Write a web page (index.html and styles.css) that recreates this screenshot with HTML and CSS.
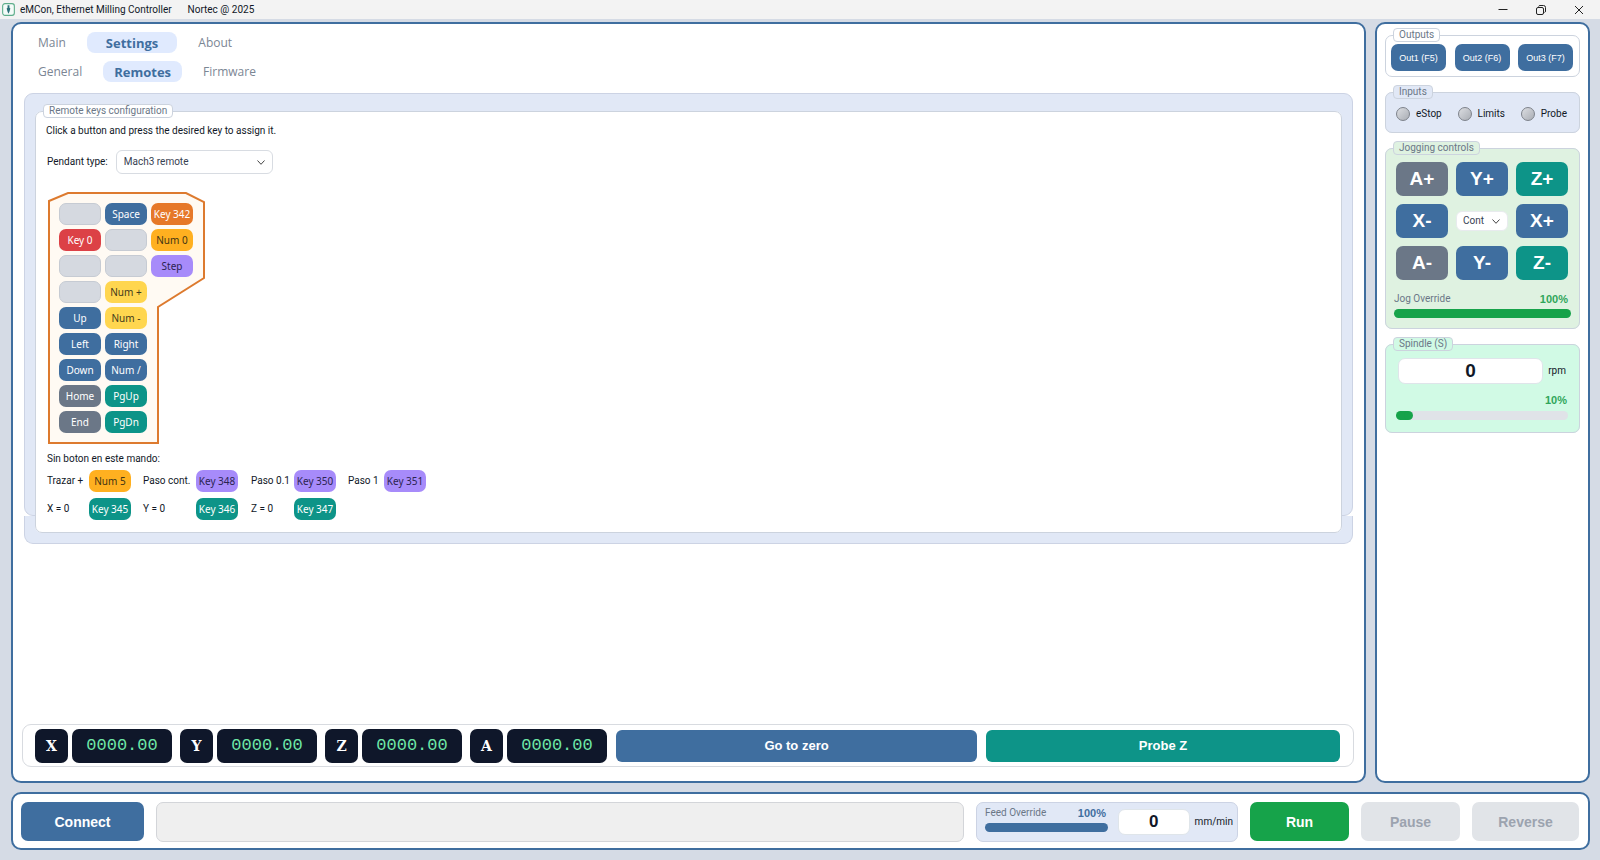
FILE: index.html
```html
<!DOCTYPE html>
<html lang="en">

<head>
    <meta charset="UTF-8">
    <meta name="viewport" content="width=device-width, initial-scale=1.0">
    <title>eMCon, Ethernet Milling Controller</title>
    <link rel="stylesheet" href="styles.css">
</head>

<body>
    <header class="titlebar">
        <svg class="app-icon" viewBox="0 0 14 14">
            <rect x="0.7" y="0.7" width="12.6" height="12.6" rx="2.5" fill="#f4fbf8" stroke="#5fae8c" stroke-width="1.2" />
            <path d="M6 2.5h2V5l1 1-1 3.5-1 2-1-2L5 6l1-1z" fill="#2b6f78" />
        </svg>
        <span class="app-name">eMCon, Ethernet Milling Controller</span>
        <span>Nortec @ 2025</span>
        <div class="window-buttons">
            <button type="button" aria-label="Minimize"><svg viewBox="0 0 10 10"><path d="M0.5 4.5h9" /></svg></button>
            <button type="button" aria-label="Restore"><svg viewBox="0 0 10 10"><rect x="0.5" y="2.5" width="7" height="7" rx="1.5" /><path d="M2.5 1.5q.4-1 1.5-1h3.5q2 0 2 2V6q0 1.200-1 1.500" /></svg></button>
            <button type="button" aria-label="Close"><svg viewBox="0 0 10 10"><path d="M1 1l8 8M9 1l-8 8" /></svg></button>
        </div>
    </header>

    <div class="workspace">
        <main class="panel main-panel">
            <nav class="tabs">
                <button type="button" class="tab">Main</button>
                <button type="button" class="tab tab-settings active">Settings</button>
                <button type="button" class="tab">About</button>
            </nav>
            <nav class="tabs">
                <button type="button" class="tab">General</button>
                <button type="button" class="tab tab-remotes active">Remotes</button>
                <button type="button" class="tab">Firmware</button>
            </nav>

            <div class="page">
                <div class="page-back"></div>
                <div class="page-foot"></div>
                <fieldset class="group remote-keys">
                    <legend>Remote keys configuration</legend>
                    <p class="hint">Click a button and press the desired key to assign it.</p>
                    <div class="pendant-type">
                        <label for="pendant">Pendant type:</label>
                        <select id="pendant" class="combo">
                            <option>Mach3 remote</option>
                        </select>
                    </div>

                    <div class="pendant">
                        <svg class="pendant-shape" viewBox="0 0 159 253">
                            <polygon points="2,10 21,2 139,2 157,11 157,87 111,116 111,252 2,252" />
                        </svg>
                        <div class="pendant-keys">
                            <button type="button" class="key empty" aria-label="Unassigned"></button>
                            <button type="button" class="key blue">Space</button>
                            <button type="button" class="key orange">Key 342</button>
                            <button type="button" class="key red">Key 0</button>
                            <button type="button" class="key empty" aria-label="Unassigned"></button>
                            <button type="button" class="key amber">Num 0</button>
                            <button type="button" class="key empty" aria-label="Unassigned"></button>
                            <button type="button" class="key empty" aria-label="Unassigned"></button>
                            <button type="button" class="key violet">Step</button>
                            <button type="button" class="key empty first" aria-label="Unassigned"></button>
                            <button type="button" class="key yellow">Num +</button>
                            <button type="button" class="key blue first">Up</button>
                            <button type="button" class="key yellow">Num -</button>
                            <button type="button" class="key blue first">Left</button>
                            <button type="button" class="key blue">Right</button>
                            <button type="button" class="key blue first">Down</button>
                            <button type="button" class="key blue">Num /</button>
                            <button type="button" class="key gray first">Home</button>
                            <button type="button" class="key teal">PgUp</button>
                            <button type="button" class="key gray first">End</button>
                            <button type="button" class="key teal">PgDn</button>
                        </div>
                    </div>

                    <p class="hint extra-hint">Sin boton en este mando:</p>
                    <div class="extra-keys">
                        <span>Trazar +</span>
                        <button type="button" class="key amber">Num 5</button>
                        <span>Paso cont.</span>
                        <button type="button" class="key violet">Key 348</button>
                        <span>Paso 0.1</span>
                        <button type="button" class="key violet">Key 350</button>
                        <span>Paso 1</span>
                        <button type="button" class="key violet">Key 351</button>
                        <span>X = 0</span>
                        <button type="button" class="key teal">Key 345</button>
                        <span>Y = 0</span>
                        <button type="button" class="key teal">Key 346</button>
                        <span>Z = 0</span>
                        <button type="button" class="key teal">Key 347</button>
                    </div>
                </fieldset>
            </div>

            <div class="dro">
                <div class="axis"><span class="axis-name">X</span><output class="axis-value">0000.00</output></div>
                <div class="axis"><span class="axis-name">Y</span><output class="axis-value">0000.00</output></div>
                <div class="axis"><span class="axis-name">Z</span><output class="axis-value">0000.00</output></div>
                <div class="axis"><span class="axis-name">A</span><output class="axis-value">0000.00</output></div>
                <div class="actions">
                    <button type="button" class="action blue">Go to zero</button>
                    <button type="button" class="action teal">Probe Z</button>
                </div>
            </div>
        </main>

        <aside class="panel side-panel">
            <fieldset class="group outputs">
                <legend>Outputs</legend>
                <button type="button" class="blue">Out1 (F5)</button>
                <button type="button" class="blue">Out2 (F6)</button>
                <button type="button" class="blue">Out3 (F7)</button>
            </fieldset>

            <fieldset class="group inputs">
                <legend>Inputs</legend>
                <span class="input-state"><i class="led"></i>eStop</span>
                <span class="input-state"><i class="led"></i>Limits</span>
                <span class="input-state"><i class="led"></i>Probe</span>
            </fieldset>

            <fieldset class="group jogging">
                <legend>Jogging controls</legend>
                <div class="jog-grid">
                    <button type="button" class="gray">A+</button>
                    <button type="button" class="blue">Y+</button>
                    <button type="button" class="teal">Z+</button>
                    <button type="button" class="blue">X-</button>
                    <select class="combo jog-mode" aria-label="Jog mode">
                        <option>Cont</option>
                    </select>
                    <button type="button" class="blue">X+</button>
                    <button type="button" class="gray">A-</button>
                    <button type="button" class="blue">Y-</button>
                    <button type="button" class="teal">Z-</button>
                </div>
                <div class="override-text">
                    <label for="jog-override">Jog Override</label>
                    <output class="percent">100%</output>
                </div>
                <input id="jog-override" class="slider green-slider full" type="range" min="0" max="100" value="100">
            </fieldset>

            <fieldset class="group spindle">
                <legend>Spindle (S)</legend>
                <div class="speed">
                    <input id="rpm" class="number" type="text" value="0">
                    <label for="rpm">rpm</label>
                </div>
                <output class="percent">10%</output>
                <input class="slider green-slider tenth" type="range" min="0" max="100" value="10" aria-label="Spindle override">
            </fieldset>
        </aside>
    </div>

    <footer class="panel bottom-bar">
        <button type="button" class="big blue connect">Connect</button>
        <input class="status" type="text" aria-label="Status" readonly>
        <div class="feed">
            <div class="feed-override">
                <div class="override-text">
                    <label for="feed-override">Feed Override</label>
                    <output class="percent">100%</output>
                </div>
                <input id="feed-override" class="slider blue-slider full" type="range" min="0" max="100" value="100">
            </div>
            <input id="feed-rate" class="number" type="text" value="0">
            <label for="feed-rate">mm/min</label>
        </div>
        <button type="button" class="big green run">Run</button>
        <button type="button" class="big pause" disabled>Pause</button>
        <button type="button" class="big reverse" disabled>Reverse</button>
    </footer>
</body>

</html>
```
FILE: styles.css
```css
* {
    box-sizing: border-box;
}

body {
    margin: 0;
    min-height: 100vh;
    display: flex;
    flex-direction: column;
    background: #d5dbe5;
    color: #111827;
    font-family: Roboto, "Open Sans", sans-serif;
    font-size: 10px;
    line-height: 14px;
}

button,
input,
select {
    font-family: inherit;
    font-size: inherit;
    line-height: inherit;
    margin: 0;
    padding: 0;
    border: none;
}

.blue {
    background: #3f6e9f;
    color: #fff;
}

.teal {
    background: #0d9488;
    color: #fff;
}

.gray {
    background: #6b7787;
    color: #fff;
}

.green {
    background: #16a34a;
    color: #fff;
}

.orange {
    background: #e67828;
    color: #fff;
}

.red {
    background: #dc4146;
    color: #fff;
}

.amber {
    background: #ffb020;
    color: #3f3413;
}

.yellow {
    background: #ffd64f;
    color: #3f3a1c;
}

.violet {
    background: #a78bfa;
    color: #2b2350;
}

/* title bar */
.titlebar {
    display: flex;
    align-items: center;
    height: 19px;
    padding-left: 2px;
    background: #f3f3f3;
}

.app-icon {
    width: 13px;
    height: 13px;
    margin-right: 5px;
}

.app-name {
    margin-right: 16px;
}

.window-buttons {
    display: flex;
    margin-left: auto;
    padding-right: 2px;
}

.window-buttons button {
    display: flex;
    align-items: center;
    justify-content: center;
    width: 38px;
    height: 17px;
    background: none;
}

.window-buttons svg {
    width: 10px;
    height: 10px;
    fill: none;
    stroke: #222;
}

/* frames */
.workspace {
    flex: 1;
    display: flex;
    gap: 9px;
    padding: 3px 10px 9px 11px;
}

.panel {
    background: #fff;
    border: 2px solid #3f6e9f;
    border-radius: 10px;
}

.main-panel {
    flex: 1;
    display: flex;
    flex-direction: column;
    padding: 8px 10px 14px 9px;
}

.side-panel {
    width: 215px;
    padding: 4px 8px;
}

.group {
    min-width: 0;
    margin: 0;
    padding: 0;
    border: 1px solid #ccd3de;
    border-radius: 7px;
    background: #fff;
}

.group legend {
    height: 14px;
    margin-left: -3px;
    padding: 0 5px;
    border: 1px solid #ccd3de;
    border-radius: 4px;
    background: inherit;
    color: #6b7787;
    line-height: 12px;
}

/* tabs */
.tabs {
    display: flex;
    gap: 11px;
    height: 21px;
    margin: 0 0 8px 6px;
}

.tab {
    padding: 0 10px;
    border-radius: 8px;
    background: none;
    color: #7b8694;
    font-family: "Open Sans", "Noto Sans", sans-serif;
    font-size: 12px;
    line-height: 20px;
}

.tab.active {
    background: #e0eafe;
    color: #3f6e9f;
    font-size: 13px;
    font-weight: bold;
}

.tab-settings {
    padding: 0 19px;
}

.tab-remotes {
    padding: 0 11px;
}

/* settings page */
.page {
    display: grid;
    grid-template-rows: 1fr 28px;
    margin: 3px 1px 0 2px;
}

.page-back {
    grid-area: 1 / 1 / 2 / 2;
    border: 1px solid #ccd3e4;
    border-radius: 9px;
    background: #e1e8f6;
}

.page-foot {
    grid-area: 2 / 1 / 3 / 2;
    border: 1px solid #ccd3e4;
    border-top: none;
    border-radius: 0 0 9px 9px;
    background: #e1e8f6;
}

.remote-keys {
    grid-area: 1 / 1 / 3 / 2;
    margin: 11px 11px 11px 11px;
    padding: 6px 10px 12px;
}

.hint {
    margin: 0;
}

.pendant-type {
    display: flex;
    align-items: center;
    gap: 8px;
    margin: 12px 0 17px 1px;
}

.combo {
    appearance: none;
    width: 157px;
    height: 24px;
    padding: 0 7px;
    border: 1px solid #d8dce2;
    border-radius: 6px;
    background: #fff url("data:image/svg+xml,%3Csvg xmlns='http://www.w3.org/2000/svg' width='8' height='5'%3E%3Cpath d='M.5.5L4 4.300 7.500.5' fill='none' stroke='%23444'/%3E%3C/svg%3E") no-repeat right 7px center;
    color: #374151;
}

.pendant {
    display: grid;
    width: 159px;
    margin-left: 1px;
}

.pendant-shape {
    grid-area: 1 / 1;
    width: 159px;
    height: 253px;
}

.pendant-shape polygon {
    fill: #fffaf3;
    stroke: #dd7a2e;
    stroke-width: 2;
}

.pendant-keys {
    grid-area: 1 / 1;
    display: grid;
    grid-template-columns: repeat(3, 42px);
    grid-auto-rows: 22px;
    gap: 4px;
    align-content: start;
    padding: 12px;
}

.key {
    width: 42px;
    height: 22px;
    border-radius: 7px;
    font-family: "Noto Sans", sans-serif;
    text-align: center;
    white-space: nowrap;
}

.key.empty {
    border: 1px solid #c6cbd3;
    background: #d5d9e0;
}

.key.first {
    grid-column: 1;
}

.extra-hint {
    margin: 7px 0 4px 1px;
}

.extra-keys {
    display: grid;
    grid-template-columns: 42px 54px 53px 55px 43px 54px 36px 42px;
    row-gap: 6px;
    align-items: center;
    margin-left: 1px;
}

/* position readout */
.dro {
    display: flex;
    align-items: center;
    gap: 8px;
    height: 43px;
    margin-top: auto;
    padding: 0 13px 0 12px;
    border: 1px solid #d8dbe0;
    border-radius: 9px;
}

.axis {
    display: flex;
    gap: 4px;
    line-height: 34px;
    text-align: center;
}

.axis-name,
.axis-value {
    border-radius: 7px;
    background: #0f172a;
}

.axis-name {
    width: 33px;
    color: #fff;
    font-family: "DejaVu Serif", serif;
    font-size: 14px;
    font-weight: bold;
}

.axis-value {
    width: 100px;
    color: #6ee7a7;
    font-family: "Liberation Mono", "Courier New", monospace;
    font-size: 17px;
}

.actions {
    flex: 1;
    display: grid;
    grid-template-columns: 51fr 50fr;
    gap: 9px;
    margin-left: 1px;
}

.action {
    height: 32px;
    border-radius: 6px;
    font-family: "Liberation Sans", Arial, sans-serif;
    font-size: 13px;
    font-weight: bold;
}

/* side panel */
.side-panel .group {
    margin-bottom: 8px;
}

.outputs,
.inputs {
    display: flex;
    justify-content: space-between;
}

.outputs {
    padding: 2px 6px 5px 5px;
}

.side-panel .outputs legend {
    margin-left: 2px;
}

.outputs button {
    width: 55px;
    height: 27px;
    border-radius: 7px;
    font-family: "Liberation Sans", Arial, sans-serif;
    font-size: 9px;
}

.inputs {
    padding: 8px 12px 11px 10px;
    background: #e1e8f6;
}

.input-state {
    display: flex;
    align-items: center;
    gap: 6px;
}

.led {
    width: 14px;
    height: 14px;
    border: 1px solid #7d828a;
    border-radius: 50%;
    background: linear-gradient(135deg, #dcdee2, #a9adb4);
}

.jogging {
    padding: 7px 8px 10px;
    background: #dff2e1;
}

.side-panel .jogging legend {
    margin-left: -1px;
}

.jog-grid {
    display: grid;
    grid-template-columns: repeat(3, 52px);
    gap: 8px;
    justify-content: space-between;
    align-items: center;
    padding: 0 3px 0 2px;
}

.jog-grid button {
    height: 34px;
    border-radius: 7px;
    font-family: "Liberation Sans", Arial, sans-serif;
    font-size: 19px;
    font-weight: bold;
}

.jog-mode {
    width: 52px;
    height: 20px;
    padding: 0 6px;
    border-color: #e8ebee;
}

.override-text {
    display: flex;
    justify-content: space-between;
    color: #6b7787;
}

.percent {
    color: #2fa65a;
    font-family: "Liberation Sans", Arial, sans-serif;
    font-size: 11px;
    font-weight: bold;
}

.jogging .override-text {
    margin: 12px 3px 3px 0;
}

.slider {
    appearance: none;
    display: block;
    width: 100%;
    height: 9px;
    border-radius: 5px;
    background: #e0e3e8;
}

.slider::-webkit-slider-thumb {
    appearance: none;
    width: 0;
    height: 9px;
}

.green-slider.full {
    background: #16a34a;
}

.green-slider.tenth {
    background: linear-gradient(#16a34a, #16a34a) no-repeat left / 7% 100%, #e0e3e8;
}

/* rounded end of the filled part */
.green-slider.tenth::-webkit-slider-thumb {
    width: 9px;
    margin-left: -8px;
    border-radius: 50%;
    background: #16a34a;
}

.blue-slider.full {
    background: #3f6e9f;
}

.spindle {
    padding: 7px 11px 12px 10px;
    background: #d1fae5;
}

.speed {
    display: flex;
    align-items: center;
    gap: 5px;
    padding: 0 2px;
}

.number {
    flex: 1;
    min-width: 0;
    height: 26px;
    border: 1px solid #dfe5ea;
    border-radius: 7px;
    background: #fff;
    color: #111827;
    font-family: "Liberation Sans", Arial, sans-serif;
    font-size: 19px;
    font-weight: bold;
    text-align: center;
}

.spindle .percent {
    display: block;
    margin: 9px 1px 4px;
    text-align: right;
}

/* bottom bar */
.bottom-bar {
    display: flex;
    gap: 12px;
    margin: 0 10px 10px 11px;
    padding: 8px 9px 6px 8px;
}

.big {
    height: 39px;
    border-radius: 7px;
    font-family: "Liberation Sans", Arial, sans-serif;
    font-size: 14px;
    font-weight: bold;
}

.big:disabled {
    background: #e1e4e8;
    color: #9ca3af;
}

.connect {
    width: 123px;
}

.run,
.pause {
    width: 99px;
}

.reverse {
    width: 107px;
}

.status {
    flex: 1;
    min-width: 0;
    height: 40px;
    border: 1px solid #d3d5d9;
    border-radius: 7px;
    background: #efefef;
}

.feed {
    display: flex;
    align-items: center;
    width: 262px;
    height: 40px;
    padding: 0 4px 0 8px;
    border: 1px solid #ccd3e4;
    border-radius: 7px;
    background: #e1e8f6;
}

.feed-override {
    align-self: flex-start;
    width: 123px;
    margin: 3px 10px 0 0;
}

.feed .override-text {
    margin-bottom: 3px;
    padding-right: 2px;
}

.feed .percent {
    color: #3f6e9f;
}

.feed .number {
    margin-right: 5px;
    font-size: 17px;
}
```
